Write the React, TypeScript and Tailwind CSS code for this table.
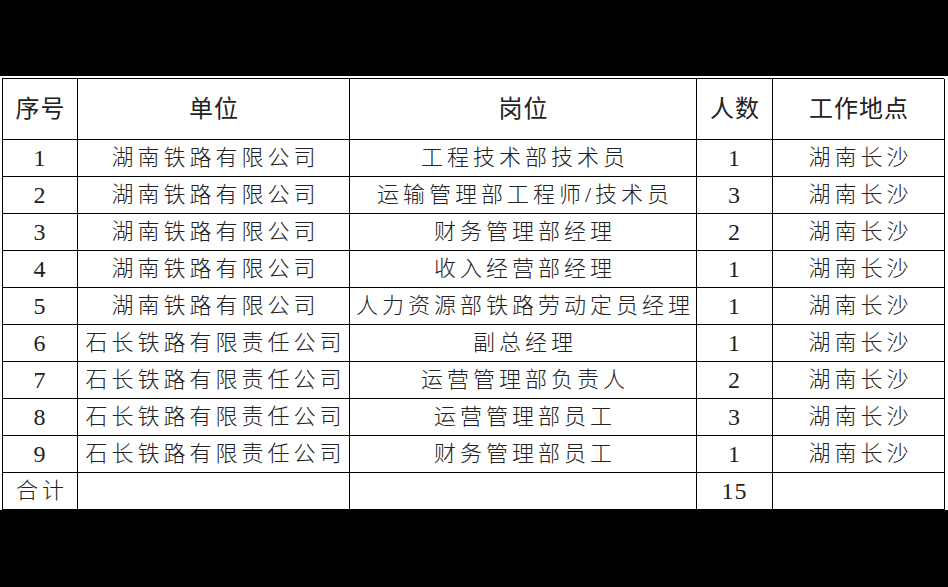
import React from "react";

const HEADERS = ["序号", "单位", "岗位", "人数", "工作地点"];

const ROWS = [
  ["1", "湖南铁路有限公司", "工程技术部技术员", "1", "湖南长沙"],
  ["2", "湖南铁路有限公司", "运输管理部工程师/技术员", "3", "湖南长沙"],
  ["3", "湖南铁路有限公司", "财务管理部经理", "2", "湖南长沙"],
  ["4", "湖南铁路有限公司", "收入经营部经理", "1", "湖南长沙"],
  ["5", "湖南铁路有限公司", "人力资源部铁路劳动定员经理", "1", "湖南长沙"],
  ["6", "石长铁路有限责任公司", "副总经理", "1", "湖南长沙"],
  ["7", "石长铁路有限责任公司", "运营管理部负责人", "2", "湖南长沙"],
  ["8", "石长铁路有限责任公司", "运营管理部员工", "3", "湖南长沙"],
  ["9", "石长铁路有限责任公司", "财务管理部员工", "1", "湖南长沙"],
  ["合计", "", "", "15", ""],
];

const font = { fontFamily: '"Liberation Serif", "Noto Sans CJK SC", serif' };

export default function App() {
  return (
    <div className="h-[587px] w-[948px] bg-black pt-[76px]" style={font}>
      <div className="h-[434px] bg-white pl-[2px] pt-[2px]">
        <div className="grid w-[942px] grid-cols-[75px_272px_347px_76px_172px] border-l border-t border-black text-[#222]">
          {HEADERS.map((h) => (
            <div
              key={h}
              className="flex h-[61px] items-center justify-center border-b border-r border-black pl-[1px] text-[24px] tracking-[1px]"
            >
              {h}
            </div>
          ))}
          {ROWS.map((row, i) =>
            row.map((cell, j) => {
              const isNum = /^\d+$/.test(cell);
              return (
                <div
                  key={i + "-" + j}
                  className={
                    "flex h-[37px] items-center justify-center border-b border-r border-black leading-none " +
                    (isNum
                      ? "text-[24px] tracking-[1px]"
                      : "pl-[4px] text-[22px] font-light tracking-[4px]")
                  }
                >
                  {cell}
                </div>
              );
            })
          )}
        </div>
      </div>
    </div>
  );
}
